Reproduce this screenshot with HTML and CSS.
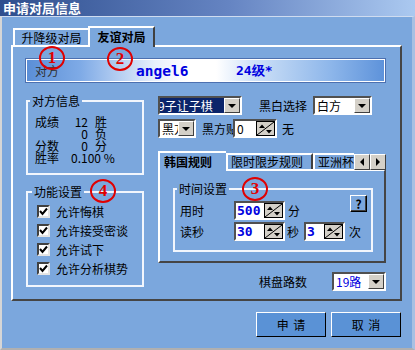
FILE: index.html
```html
<!DOCTYPE html>
<html lang="zh">
<head>
<meta charset="UTF-8">
<title>申请对局信息</title>
<link rel="stylesheet" href="styles.css">
</head>
<body>
<div class="win">
 <div class="titlebar">申请对局信息</div>
 <div class="client">
  <div class="tabs">
   <div class="tab t1">升降级对局</div>
   <div class="tab t2 active">友谊对局</div>
  </div>
  <div class="pane">
   <div class="opp">
    <span class="opp-label">对方</span>
    <span class="opp-name">angel6</span>
    <span class="opp-rank">24级*</span>
   </div>
   <div class="cols">
    <div class="left">
     <fieldset class="group info">
      <legend>对方信息</legend>
      <div class="stats">
       <div class="stat"><span class="k">成绩</span><span class="n">12</span><span class="u">胜</span></div>
       <div class="stat"><span class="k"></span><span class="n">0</span><span class="u">负</span></div>
       <div class="stat"><span class="k">分数</span><span class="n">0</span><span class="u">分</span></div>
       <div class="stat"><span class="k">胜率</span><span>0.100 %</span></div>
      </div>
     </fieldset>
     <fieldset class="group funcs">
      <legend>功能设置</legend>
      <div class="chk"><span class="box"><svg viewBox="0 0 9 9"><polyline points="1,4 3.5,7 8,1.5"/></svg></span>允许悔棋</div>
      <div class="chk"><span class="box"><svg viewBox="0 0 9 9"><polyline points="1,4 3.5,7 8,1.5"/></svg></span>允许接受密谈</div>
      <div class="chk"><span class="box"><svg viewBox="0 0 9 9"><polyline points="1,4 3.5,7 8,1.5"/></svg></span>允许试下</div>
      <div class="chk"><span class="box"><svg viewBox="0 0 9 9"><polyline points="1,4 3.5,7 8,1.5"/></svg></span>允许分析棋势</div>
     </fieldset>
    </div>
    <div class="right">
     <div class="row r1">
      <div class="sel s-mode"><span class="txt hl">9子让子棋</span><span class="dd"></span></div>
      <span class="lbl bw">黑白选择</span>
      <div class="sel s-side"><span class="txt">白方</span><span class="dd"></span></div>
     </div>
     <div class="row r2">
      <div class="sel s-black"><span class="txt">黑方</span><span class="dd"></span></div>
      <span class="lbl komi">黑方贴</span>
      <div class="spin s-komi"><span class="val plain">0</span><svg class="arrows" viewBox="0 0 19 15"><rect x="0.5" y="0.5" width="18" height="14"/><line x1="1" y1="14" x2="18" y2="1"/><polygon points="3,7 6,3.5 9,7"/><polygon points="10,9 13,12.5 16,9"/></svg></div>
      <span class="lbl none">无</span>
     </div>
     <div class="subtabs">
      <div class="stab active">韩国规则</div>
      <div class="stab">限时限步规则</div>
      <div class="stab cut">亚洲杯赛规则</div>
      <span class="arr prev"></span><span class="arr next"></span>
     </div>
     <div class="subpane">
      <fieldset class="group time">
       <legend>时间设置</legend>
       <div class="trow">
        <span class="tl">用时</span>
        <div class="spin w51"><span class="val">500</span><svg class="arrows" viewBox="0 0 19 15"><rect x="0.5" y="0.5" width="18" height="14"/><line x1="1" y1="14" x2="18" y2="1"/><polygon points="3,7 6,3.5 9,7"/><polygon points="10,9 13,12.5 16,9"/></svg></div>
        <span class="unit">分</span>
        <span class="help">?</span>
       </div>
       <div class="trow">
        <span class="tl">读秒</span>
        <div class="spin w51"><span class="val">30</span><svg class="arrows" viewBox="0 0 19 15"><rect x="0.5" y="0.5" width="18" height="14"/><line x1="1" y1="14" x2="18" y2="1"/><polygon points="3,7 6,3.5 9,7"/><polygon points="10,9 13,12.5 16,9"/></svg></div>
        <span class="unit sec">秒</span>
        <div class="spin w41"><span class="val">3</span><svg class="arrows" viewBox="0 0 19 15"><rect x="0.5" y="0.5" width="18" height="14"/><line x1="1" y1="14" x2="18" y2="1"/><polygon points="3,7 6,3.5 9,7"/><polygon points="10,9 13,12.5 16,9"/></svg></div>
        <span class="unit times">次</span>
       </div>
      </fieldset>
     </div>
     <div class="row board">
      <span class="lbl">棋盘路数</span>
      <div class="sel s-board"><span class="txt blue">19路</span><span class="dd"></span></div>
     </div>
    </div>
   </div>
  </div>
  <div class="buttons">
   <button class="btn">申 请</button>
   <button class="btn">取 消</button>
  </div>
 </div>
 <span class="mark m1">1</span>
 <span class="mark m2">2</span>
 <span class="mark m3">3</span>
 <span class="mark m4">4</span>
</div>
</body>
</html>
```

FILE: styles.css
```css
*{box-sizing:border-box}
body{margin:0;background:#fff;font-family:"Noto Sans CJK SC","Noto Sans",sans-serif;font-size:12px;color:#000}
.win{position:relative;width:415px;height:350px;background:#7ba7dd;display:flex;flex-direction:column}
.titlebar{height:16px;background:linear-gradient(to right,#2e4e8e,#6584c2 55%,#abc9f0);color:#fff;font-weight:bold;font-size:13px;line-height:16px;padding-left:3px;white-space:nowrap}
.client{flex:1;border-top:1px solid #cfdcf0;border-left:2px solid #d6d6d6;border-right:3px solid #a8c0e2;border-bottom:2px solid #b0b0b0;padding:9px 10px 0 9px}

.tabs{display:flex;align-items:flex-end;height:19px;padding-left:2px;position:relative;z-index:1}
.tab{height:17px;border:2px solid;border-bottom:0;border-color:#fff #404040 transparent #fff;text-align:center;line-height:15px;background:#7ba7dd;white-space:nowrap}
.t1{width:75px;border-right:0}
.t2{width:67px;height:21px;margin-bottom:-2px;font-weight:bold;line-height:18px}

.pane{height:256px;border:2px solid;border-color:#fff #454545 #454545 #fff;padding:11px 14px 0 12px}
.opp{height:25px;display:flex;align-items:center;border:1px solid #4c70b0;box-shadow:inset 0 0 0 1px #fff;background:linear-gradient(to right,#5a8ed6 0%,#7eaae6 15%,#e8f0fc 36%,#fff 45%,#fff 53%,#d0e2f8 63%,#8db6ea 85%,#5d92da 100%);padding-left:9px}
.opp-label{width:101px;color:#303030}
.opp-name,.opp-rank{font-family:"DejaVu Sans Mono",monospace;font-weight:bold;color:#0000e0}
.opp-name{width:100px;font-size:14.5px}
.opp-rank{font-size:13px}

.cols{display:flex}
.left{width:118px;margin-left:1px;flex-shrink:0}
.right{width:228px;margin-left:14px;margin-top:13px;flex-shrink:0}

.group{border:2px solid #f2f6fd;margin:0;padding:0;min-width:0}
.group legend{padding:0 2px;margin-left:2px;line-height:16px}
.info{margin-top:10px;height:82px}
.stats{padding:7px 0 0 7px;line-height:12px}
.stat{display:flex;white-space:nowrap}
.stat .k{width:36px}
.stat .n{width:17px;text-align:right}
.stat .u{margin-left:7px}

.funcs{margin-top:9px;height:103px;padding:2px 0 0 9px}
.funcs legend{margin-left:-5px}
.chk{display:flex;align-items:center;height:19px}
.box{width:13px;height:13px;border:2px solid;border-color:#404040 #e4e4e4 #e4e4e4 #404040;background:#fff;margin-right:6px;display:flex}
.box svg{width:9px;height:9px;fill:none;stroke:#000;stroke-width:2}

.row{display:flex;align-items:center;height:19px}
.r2{margin-top:4px}
.sel{display:flex;height:19px;border:2px solid;border-color:#505050 #fff #fff #505050;background:#fff}
.sel .txt{flex:1;overflow:hidden;white-space:nowrap;line-height:15px;padding-left:2px}
.sel .hl{background:#0a246a;color:#fff;padding-left:0;text-indent:-2px}
.sel .blue{color:#0000e0}
.dd{width:16px;height:15px;background:#d4d0c8;border:1px solid;border-color:#fff #404040 #404040 #fff;display:flex;align-items:center;justify-content:center}
.dd::after{content:"";border-left:4px solid transparent;border-right:4px solid transparent;border-top:4px solid #000}
.s-mode{width:84px}
.bw{margin-left:17px}
.s-side{width:59px;margin-left:6px}
.s-black{width:38px}
.komi{margin-left:6px;width:31px;overflow:hidden;white-space:nowrap}
.none{margin-left:5px}

.spin{display:flex;height:19px;border:2px solid;border-color:#505050 #fff #fff #505050;background:#fff}
.spin .val{flex:1;font-family:"DejaVu Sans Mono",monospace;font-weight:bold;font-size:13px;line-height:15px;color:#0000e0;padding-left:1px}
.spin .plain{font-family:"Noto Sans CJK SC",sans-serif;font-weight:normal;font-size:12px;color:#000;padding-left:2px}
.arrows{width:19px;height:15px}
.arrows rect{fill:#d4d0c8;stroke:#000}
.arrows line{stroke:#000;stroke-width:1}
.arrows polygon{fill:#000}
.s-komi{width:44px}
.w51{width:51px}
.w41{width:41px;margin-left:5px}

.subtabs{display:flex;align-items:flex-end;height:18px;margin-top:13px;position:relative;z-index:1}
.stab{height:16px;border:2px solid;border-bottom:0;border-color:#fff #404040 transparent #fff;background:#7ba7dd;line-height:14px;padding:0 3px;white-space:nowrap}
.stab.active{width:68px;height:20px;margin-bottom:-2px;font-weight:bold;line-height:18px;padding-left:4px;border-right:0}
.stab:nth-child(2){width:87px}
.stab.cut{width:41px;overflow:hidden;border-right:0}
.arr{width:16px;height:16px;background:#d4d0c8;border:1px solid;border-color:#fff #404040 #404040 #fff;display:flex;align-items:center;justify-content:center;margin-bottom:-1px}
.arr.prev::after{content:"";border-top:4px solid transparent;border-bottom:4px solid transparent;border-right:4px solid #000}
.arr.next::after{content:"";border-top:4px solid transparent;border-bottom:4px solid transparent;border-left:4px solid #000}

.subpane{height:94px;border:2px solid;border-color:#fff #454545 #454545 #fff;padding:10px 11px 0 13px}
.time{height:71px;padding:4px 0 0 5px}
.time legend{margin-left:-3px}
.trow{display:flex;align-items:center;height:19px}
.trow+.trow{margin-top:2px}
.tl{width:54px}
.unit{margin-left:3px}
.unit.sec{margin-left:2px}
.unit.times{margin-left:4px}
.help{margin-left:auto;margin-right:4px;align-self:flex-start;margin-top:-6px;width:17px;height:17px;border:1px solid;border-color:#fff #000 #000 #fff;box-shadow:inset -1px -1px #404040;font-weight:bold;text-align:center;line-height:15px}

.board{margin-top:9px;justify-content:flex-end}
.s-board{width:54px;margin-left:25px}

.buttons{display:flex;justify-content:flex-end;gap:5px;margin-top:11px;padding-right:1px}
.btn{width:70px;height:25px;background:#5a92d6;border:1px solid;border-color:#fff #000 #000 #fff;font:12px "Noto Sans CJK SC",sans-serif;color:#000;word-spacing:2px;padding:0}

.mark{position:absolute;width:26px;height:24px;border:2px solid #e00000;border-radius:50%;color:#e00000;font:bold 17px/20px "Liberation Serif",serif;text-align:center}
.m1{left:39px;top:46px}
.m2{left:107px;top:47px}
.m3{left:242px;top:177px}
.m4{left:90px;top:179px}
```
